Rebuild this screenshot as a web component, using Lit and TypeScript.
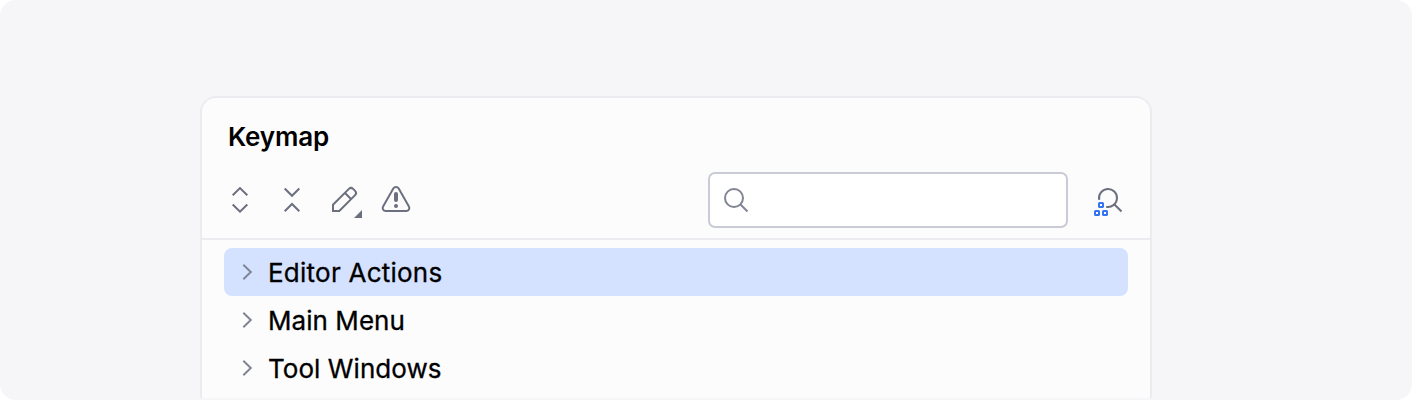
import { LitElement, html, css } from "lit";
import { customElement } from "lit/decorators.js";

@customElement("app-root")
export class AppRoot extends LitElement {
  static styles = css`
    :host { display: block; background: #fff; }
    * { box-sizing: border-box; }
    svg { display: block; fill: none; stroke: #6c707e; stroke-width: 2; flex: none; }
    .stage {
      height: 400px; padding: 96px 260px 2px 200px; border-radius: 16px;
      background: #f6f6f9; color: #000; overflow: hidden;
      font: 400 26px/32px Inter, sans-serif;
    }
    .panel {
      height: 302px; border: 2px solid #ebecf0; border-bottom: 0;
      border-radius: 16px 16px 0 0; background: #fcfcfd;
    }
    .title { margin: 0; padding: 23px 26px 0; font-size: 26px; font-weight: 600; line-height: 32px; letter-spacing: -0.15px; }
    .toolbar {
      display: flex; align-items: center; height: 87px; padding: 9px 26px 0 22px;
      border-bottom: 2px solid #ebecf0;
    }
    .tools { display: flex; gap: 20px; }
    .tools svg { overflow: visible; }
    .search {
      width: 360px; height: 56px; margin: 0 24px 0 auto; padding: 0 10px;
      display: flex; align-items: center;
      border: 2px solid #c9ccd6; border-radius: 7px; background: #fff;
    }
    .tree { padding: 8px 22px 0; margin: 0; list-style: none; letter-spacing: 0.06px; -webkit-text-stroke: 0.3px #000; }
    .row { display: flex; align-items: center; height: 48px; padding-left: 8px; border-radius: 8px; }
    .row svg { margin-right: 4px; }
    .row span { padding-top: 2px; }
    .row svg, .search svg { stroke: #818594; }
    .selected { background: #d4e2ff; letter-spacing: 0.24px; }
    .solid { fill: #6c707e; stroke: none; }
    .blue { stroke: #3574f0; }
  `;

  private rows = ["Editor Actions", "Main Menu", "Tool Windows"];

  render() {
    return html`
      <div class="stage">
        <section class="panel">
          <h1 class="title">Keymap</h1>
          <div class="toolbar">
            <div class="tools">
              <svg width="32" height="32"><path d="M8.7 11.3 16 4.1l7.3 7.2M8.7 20.5l7.3 7.2 7.3-7.2" /></svg>
              <svg width="32" height="32"><path d="M8.7 4.5 16 11.8l7.3-7.3M8.7 27.3 16 20l7.3 7.3" /></svg>
              <svg width="32" height="32">
                <path d="M5 27v-6.3L20.9 4.9a3 3 0 0 1 4.2 0l2 2a3 3 0 0 1 0 4.2L11.3 27ZM17 9l6 6" />
                <path class="solid" d="M34 26v8h-8Z" />
              </svg>
              <svg width="32" height="32">
                <path d="M13.3 4.6a3.1 3.1 0 0 1 5.4 0l10.2 17.8a3.05 3.05 0 0 1-2.6 4.6H5.7a3.05 3.05 0 0 1-2.6-4.6Z" />
                <rect class="solid" x="14" y="8" width="4" height="10" rx="2" />
                <circle class="solid" cx="16" cy="22" r="2" />
              </svg>
            </div>
            <div class="search">
              <svg width="32" height="32"><circle cx="14" cy="14" r="9" /><path d="m20.5 20.5 7 7" /></svg>
            </div>
            <svg width="32" height="32">
              <path d="M7.2 15.9A9 9 0 1 1 14.2 22.8M22.5 20.5l7 7" />
              <g class="blue">
                <rect x="7" y="19" width="4" height="4" rx=".5" />
                <rect x="3" y="27" width="4" height="4" rx=".5" />
                <rect x="11" y="27" width="4" height="4" rx=".5" />
              </g>
            </svg>
          </div>
          <ul class="tree">
            ${this.rows.map((label, i) => html`
              <li class="row ${i === 0 ? "selected" : ""}">
                <svg width="32" height="32"><path d="m11.3 8.7 7.5 7.3-7.5 7.3" /></svg>
                <span>${label}</span>
              </li>`)}
          </ul>
        </section>
      </div>`;
  }
}
